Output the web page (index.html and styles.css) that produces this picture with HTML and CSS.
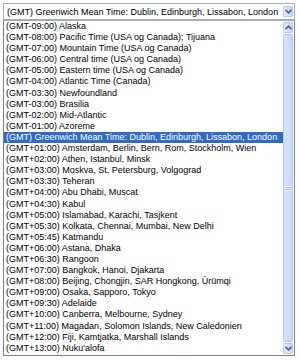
FILE: index.html
```html
<!DOCTYPE html>
<html lang="da">
<head>
    <meta charset="UTF-8">
    <meta name="viewport" content="width=device-width, initial-scale=1.0">
    <title>Tidszone</title>
    <link rel="stylesheet" href="styles.css">
</head>
<body>

    <div class="picker">
        <div class="combo">
            <div class="combo-value">(GMT) Greenwich Mean Time: Dublin, Edinburgh, Lissabon, London</div>
            <div class="btn btn-down">
                <svg width="7" height="5" viewBox="0 0 7 5"><path d="M0.5 0.8 L3.5 3.8 L6.5 0.8" fill="none" stroke="#4d6185" stroke-width="1.6"/></svg>
            </div>
        </div>

        <div class="dropdown">
            <ul class="options">
                <li>(GMT-09:00) Alaska</li>
                <li>(GMT-08:00) Pacific Time (USA og Canada); Tijuana</li>
                <li>(GMT-07:00) Mountain Time (USA og Canada)</li>
                <li>(GMT-06:00) Central time (USA og Canada)</li>
                <li>(GMT-05:00) Eastern time (USA og Canada)</li>
                <li>(GMT-04:00) Atlantic Time (Canada)</li>
                <li>(GMT-03:30) Newfoundland</li>
                <li>(GMT-03:00) Brasilia</li>
                <li>(GMT-02:00) Mid-Atlantic</li>
                <li>(GMT-01:00) Azoreme</li>
                <li class="selected">(GMT) Greenwich Mean Time: Dublin, Edinburgh, Lissabon, London</li>
                <li>(GMT+01:00) Amsterdam, Berlin, Bern, Rom, Stockholm, Wien</li>
                <li>(GMT+02:00) Athen, Istanbul, Minsk</li>
                <li>(GMT+03:00) Moskva, St. Petersburg, Volgograd</li>
                <li>(GMT+03:30) Teheran</li>
                <li>(GMT+04:00) Abu Dhabi, Muscat</li>
                <li>(GMT+04:30) Kabul</li>
                <li>(GMT+05:00) Islamabad, Karachi, Tasjkent</li>
                <li>(GMT+05:30) Kolkata, Chennai, Mumbai, New Delhi</li>
                <li>(GMT+05:45) Katmandu</li>
                <li>(GMT+06:00) Astana, Dhaka</li>
                <li>(GMT+06:30) Rangoon</li>
                <li>(GMT+07:00) Bangkok, Hanoi, Djakarta</li>
                <li>(GMT+08:00) Beijing, Chongjin, SAR Hongkong, Ürümqi</li>
                <li>(GMT+09:00) Osaka, Sapporo, Tokyo</li>
                <li>(GMT+09:30) Adelaide</li>
                <li>(GMT+10:00) Canberra, Melbourne, Sydney</li>
                <li>(GMT+11:00) Magadan, Solomon Islands, New Caledonien</li>
                <li>(GMT+12:00) Fiji, Kamtjatka, Marshall Islands</li>
                <li>(GMT+13:00) Nuku'alofa</li>
            </ul>

            <!-- scrollbar -->
            <div class="scrollbar">
                <div class="btn">
                    <svg width="7" height="5" viewBox="0 0 7 5"><path d="M0.5 4.2 L3.5 1.2 L6.5 4.2" fill="none" stroke="#4d6185" stroke-width="1.6"/></svg>
                </div>
                <div class="track">
                    <div class="thumb"><span class="grip"></span></div>
                </div>
                <div class="btn">
                    <svg width="7" height="5" viewBox="0 0 7 5"><path d="M0.5 0.8 L3.5 3.8 L6.5 0.8" fill="none" stroke="#4d6185" stroke-width="1.6"/></svg>
                </div>
            </div>
        </div>
    </div>

</body>
</html>
```

FILE: styles.css
```css
body {
    margin: 0;
    padding: 3px 0 0 3px;
    background: #fff;
    font-family: 'Liberation Sans', Arial, sans-serif;
    font-size: 9px;
    color: #000;
}

.picker {
    width: 292px;
    display: flex;
    flex-direction: column;
}

.combo {
    height: 17px;
    border: 1px solid #a5acb2;
    display: flex;
    align-items: center;
    box-sizing: border-box;
    padding: 1px;
}

.combo-value {
    flex: 1;
    padding-left: 2px;
    white-space: nowrap;
    overflow: hidden;
}

.btn {
    width: 10px;
    height: 11px;
    box-sizing: border-box;
    border: 1px solid #b9c9ef;
    border-radius: 1px;
    background: linear-gradient(to right, #e1eafe, #c7d5fb);
    display: flex;
    align-items: center;
    justify-content: center;
}

.dropdown {
    height: 336px;
    border: 1px solid #7f7f7f;
    border-top-color: #a5acb2;
    box-sizing: border-box;
    display: flex;
}

.options {
    flex: 1;
    list-style: none;
    margin: 0;
    padding: 0;
    overflow: hidden;
}

.options li {
    height: 11.1px;
    line-height: 11.1px;
    padding-left: 2px;
    white-space: nowrap;
    overflow: hidden;
}

.options li.selected {
    background: #316ac5;
    color: #fff;
}

.scrollbar {
    width: 10px;
    padding: 1px 1px 1px 0;
    display: flex;
    flex-direction: column;
    background: #fdfdfd;
}

.track {
    flex: 1;
    display: flex;
    flex-direction: column;
    padding: 1px 0;
}

.thumb {
    flex: 1;
    border: 1px solid #b3c6f1;
    border-radius: 2px;
    background: linear-gradient(to right, #dbe6fd, #c4d5fc);
    display: flex;
    align-items: center;
    justify-content: center;
}

.grip {
    width: 5px;
    height: 5px;
    background: repeating-linear-gradient(to bottom, #eef3fe 0, #eef3fe 1px, #a8bdeb 1px, #a8bdeb 2px);
}
```
